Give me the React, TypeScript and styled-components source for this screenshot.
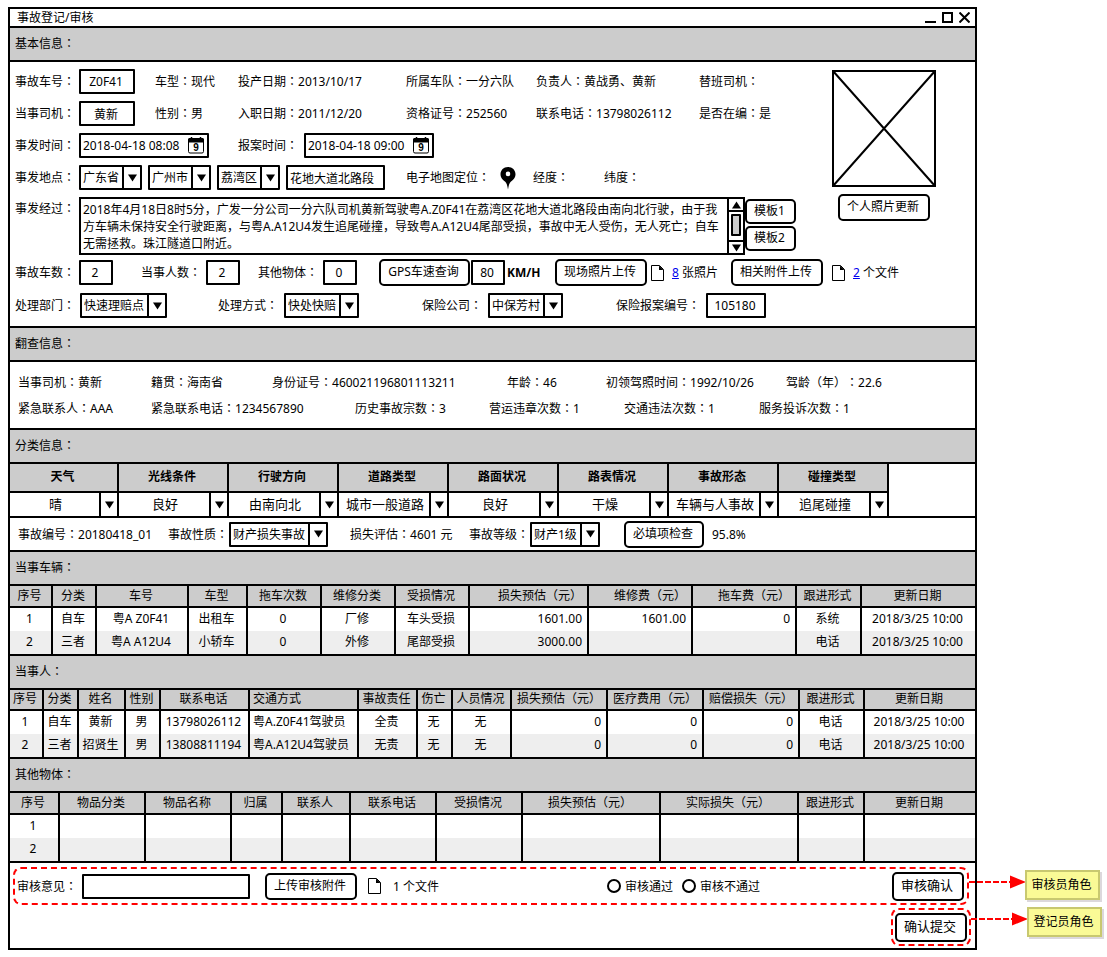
import React, { Fragment, useId } from "react";
import styled, { createGlobalStyle, css } from "styled-components";

const INK = "#000";
const PANEL = "#cccccc";
const STRIPE = "#eeeeee";
const FONT = '"Noto Sans", "Noto Sans CJK SC", sans-serif';

const GlobalStyle = createGlobalStyle`
  *, *::before, *::after { box-sizing: border-box; }
  body {
    margin: 0;
    background: #fff;
    color: ${INK};
    font: 12px/17px ${FONT};
    text-spacing-trim: space-all;
  }
  input, select, textarea, button { font: inherit; color: inherit; margin: 0; border-radius: 0; }
`;

/* ---------- frame ---------- */

const Page = styled.div`
  padding: 7px 130px 7px 8px;
`;

const Window = styled.main`
  min-width: 960px;
  border: 2px solid ${INK};
  background: #fff;
`;

const TitleBar = styled.header`
  display: flex;
  align-items: center;
  justify-content: space-between;
  height: 19px;
  padding: 0 5px 0 7px;
  border-bottom: 2px solid ${INK};
`;

const Title = styled.h1`
  margin: 0;
  font-size: 12px;
  line-height: 17px;
  font-weight: 400;
`;

const WindowControls = styled.div`
  display: flex;
  gap: 6px;
`;

const ControlButton = styled.button`
  display: block;
  width: 11px;
  height: 11px;
  padding: 0;
  border: 0;
  background: none;
  svg { display: block; }
`;

const SectionBar = styled.h2`
  height: 34px;
  margin: 0;
  padding: 7px 5px 0;
  background: ${PANEL};
  border-bottom: 2px solid ${INK};
  font-size: 12px;
  line-height: 17px;
  font-weight: 400;
`;

const Panel = styled.section<{ $pad?: string }>`
  padding: ${(p) => p.$pad ?? "0"};
  border-bottom: 2px solid ${INK};
`;

/* ---------- rows and fields ---------- */

const Row = styled.div<{ $h?: number; $top?: number }>`
  display: flex;
  align-items: center;
  min-height: ${(p) => p.$h ?? 25}px;
  margin-top: ${(p) => p.$top ?? 0}px;
  white-space: nowrap;
`;

const basis = css<{ $w?: number }>`
  flex: 0 0 ${(p) => (p.$w ? `${p.$w}px` : "auto")};
`;

const Cell = styled.div<{ $w?: number }>`
  ${basis}
  display: flex;
  align-items: center;
`;

const FieldLabel = styled.label<{ $w?: number }>`
  ${basis}
`;

const Value = styled.span<{ $w?: number }>`
  ${basis}
`;

/* The traditional face centres the full-width colon in its cell. */
const Colon = styled.span`
  font-family: "Noto Sans", "Noto Sans CJK TC", sans-serif;
`;

const TextBox = styled.input<{ $w: number; $left?: boolean }>`
  width: ${(p) => p.$w}px;
  height: 25px;
  padding: 0 4px 0 2px;
  border: 2px solid ${INK};
  border-radius: 1px;
  background: #fff;
  text-align: ${(p) => (p.$left ? "left" : "center")};
`;

const DateBox = styled.div`
  display: flex;
  align-items: center;
  width: 130px;
  height: 25px;
  padding: 0 3px 0 2px;
  border: 2px solid ${INK};
  border-radius: 1px;
`;

const DateInput = styled.input`
  flex: 1;
  min-width: 0;
  padding: 0;
  border: 0;
  outline: 0;
  background: none;
`;

const SelectBox = styled.div<{ $w?: number; $plain?: boolean }>`
  position: relative;
  width: ${(p) => (p.$w ? `${p.$w}px` : "100%")};
  height: ${(p) => (p.$plain ? 23 : 25)}px;
  border: ${(p) => (p.$plain ? "0" : `2px solid ${INK}`)};
  border-radius: 1px;
  font-size: ${(p) => (p.$plain ? 13 : 12)}px;
`;

const NativeSelect = styled.select<{ $center?: boolean }>`
  appearance: none;
  display: block;
  width: 100%;
  height: 100%;
  padding: 0 18px 0 2px;
  border: 0;
  background: none;
  text-align-last: ${(p) => (p.$center ? "center" : "left")};
`;

const SelectArrow = styled.span`
  position: absolute;
  top: 0;
  right: 0;
  bottom: 0;
  display: flex;
  align-items: center;
  justify-content: center;
  width: 18px;
  border-left: 2px solid ${INK};
  background: #fff;
  pointer-events: none;
`;

const Button = styled.button<{ $w: number; $size?: "small" | "large" }>`
  width: ${(p) => p.$w}px;
  height: ${(p) => (p.$size === "small" ? 25 : p.$size === "large" ? 29 : 27)}px;
  padding: 0 2px 2px 0;
  border: 2px solid ${INK};
  border-radius: 5px;
  background: #fff;
  font-size: ${(p) => (p.$size === "large" ? 13 : 12)}px;
  white-space: nowrap;
`;

const Link = styled.a`
  color: #0000ee;
`;

/* ---------- basic information ---------- */

const BasicTop = styled.div`
  display: flex;
  align-items: flex-start;
`;

const BasicFields = styled.div`
  flex: 1;
  min-width: 0;
  display: flex;
  flex-direction: column;
  gap: 7px;
`;

const PhotoColumn = styled.aside`
  display: flex;
  flex-direction: column;
  align-items: center;
  gap: 7px;
  width: 104px;
  margin: 1px 39px 0 0;
  svg { display: block; }
`;

const StoryRow = styled.div`
  display: flex;
  align-items: flex-start;
  padding-right: 36px;
  > label { padding-top: 3px; }
`;

const StoryBox = styled.div`
  flex: 1;
  display: flex;
  height: 58px;
  border: 2px solid ${INK};
`;

const StoryText = styled.textarea`
  flex: 1;
  min-width: 0;
  padding: 2px 0 0 2px;
  border: 0;
  outline: 0;
  resize: none;
  overflow: hidden;
  background: none;
  line-height: 17px;
`;

const ScrollBar = styled.div`
  display: flex;
  flex-direction: column;
  width: 16px;
  border-left: 2px solid ${INK};
`;

const ScrollEnd = styled.span`
  display: flex;
  align-items: center;
  justify-content: center;
  height: 11px;
`;

const ScrollTrack = styled.div`
  flex: 1;
  padding: 2px 2px 4px;
  border-top: 2px solid ${INK};
  border-bottom: 2px solid ${INK};
`;

const ScrollThumb = styled.div`
  height: 100%;
  border: 2px solid ${INK};
  border-radius: 1px;
  background: ${PANEL};
`;

const TemplateButtons = styled.div`
  display: flex;
  flex-direction: column;
  gap: 2px;
  padding-top: 2px;
`;

/* ---------- tables ---------- */

const Table = styled.table<{ $fit?: boolean; $head: number }>`
  width: ${(p) => (p.$fit ? "auto" : "100%")};
  table-layout: fixed;
  border-collapse: separate;
  border-spacing: 0;
  th {
    height: ${(p) => p.$head}px;
    background: ${PANEL};
    border-bottom: 2px solid ${INK};
  }
`;

type CellProps = { $align?: string; $line?: boolean; $flush?: boolean };

const cellBox = css<CellProps>`
  padding: ${(p) =>
    p.$flush ? "0" : p.$align === "right" ? "0 5px 2px 0" : p.$align === "left" ? "0 0 2px 3px" : "0 2px 2px 0"};
  border-right: ${(p) => (p.$line ? 2 : 0)}px solid ${INK};
  text-align: ${(p) => p.$align ?? "center"};
  white-space: nowrap;
`;

const HeadCell = styled.th<CellProps & { $bold?: boolean }>`
  ${cellBox}
  font-weight: ${(p) => (p.$bold ? 700 : 400)};
`;

const DataCell = styled.td<CellProps>`
  ${cellBox}
  height: 23px;
`;

const DataRow = styled.tr`
  &:nth-child(even) { background: ${STRIPE}; }
`;

/* ---------- review area ---------- */

const Footer = styled.footer`
  padding: 4px 0 2px;
`;

const ReviewBox = styled.div`
  position: relative;
  display: flex;
  align-items: center;
  height: 38px;
  margin: 0 6px 3px 3px;
  padding: 0 3px 0 2px;
  border: 2px dashed #f00;
  border-radius: 8px;
  white-space: nowrap;
`;

const SubmitBox = styled.div`
  position: relative;
  display: flex;
  align-items: center;
  justify-content: center;
  width: 80px;
  height: 38px;
  margin: 0 4px 0 auto;
  border: 2px dashed #f00;
  border-radius: 8px;
`;

const RadioGroup = styled.div`
  display: flex;
  gap: 9px;
`;

const RadioLabel = styled.label`
  display: flex;
  align-items: center;
  gap: 4px;
`;

const Radio = styled.input`
  appearance: none;
  flex: none;
  width: 14px;
  height: 14px;
  border: 2px solid ${INK};
  border-radius: 50%;
  background: #fff;
  &:checked { box-shadow: inset 0 0 0 2px #fff; background: ${INK}; }
`;

const ReviewEnd = styled.div`
  margin-left: auto;
`;

const Callout = styled.div<{ $top: number }>`
  position: absolute;
  top: ${(p) => p.$top}px;
  left: 100%;
  display: flex;
  svg { display: block; overflow: visible; }
`;

const Note = styled.div`
  display: flex;
  align-items: center;
  justify-content: center;
  width: 75px;
  height: 30px;
  padding: 0 2px 2px 0;
  border: 2px solid #c8c870;
  background: #fafa96;
  box-shadow: 2px 2px 0 #dcd8dc;
  white-space: nowrap;
`;

/* ---------- drawings ---------- */

const Triangle = ({ up }: { up?: boolean }) => (
  <svg width="9" height="8" viewBox="0 0 9 8" aria-hidden="true">
    <path d={up ? "M0 7.5 4.5 0.5 9 7.5Z" : "M0 0.5H9L4.5 7.5Z"} fill={INK} />
  </svg>
);

const CalendarIcon = () => (
  <svg width="16" height="17" viewBox="0 0 16 17" aria-hidden="true">
    <rect x="0.5" y="1.5" width="15" height="14.5" rx="1.5" fill="#fff" stroke={INK} />
    <path d="M0 2.5Q0 1 1.5 1H14.5Q16 1 16 2.5V5.5H0Z" fill={INK} />
    <path d="M3.5 0V2M12.5 0V2" stroke={INK} strokeWidth="1.5" />
    <text x="8" y="14" textAnchor="middle" fontFamily="Liberation Sans, sans-serif" fontSize="10" fontWeight="700">9</text>
  </svg>
);

const PinIcon = () => (
  <svg width="16" height="24" viewBox="0 0 16 24" aria-hidden="true">
    <path
      fillRule="evenodd"
      fill={INK}
      d="M8 1C3.6 1 0.5 4.2 0.5 8.2C0.5 11.8 3 14 5 15.6C6.6 17 7.2 19 8 23.5C8.8 19 9.4 17 11 15.6C13 14 15.5 11.8 15.5 8.2C15.5 4.2 12.4 1 8 1ZM8 5.6A2.3 2.3 0 1 1 8 10.2A2.3 2.3 0 1 1 8 5.6Z"
    />
  </svg>
);

const FileIcon = () => (
  <svg width="13" height="16" viewBox="0 0 13 16" aria-hidden="true">
    <path d="M0.5 0.5H8.5L12.5 4.5V15.5H0.5Z" fill="#fff" stroke={INK} />
    <path d="M8 0.5V5H12.5Z" fill={INK} />
  </svg>
);

const PhotoPlaceholder = () => (
  <svg width="104" height="117" viewBox="0 0 104 117" role="img" aria-label="个人照片">
    <rect x="1" y="1" width="102" height="115" fill="#fff" stroke={INK} strokeWidth="2" />
    <path d="M1 1 103 116M103 1 1 116" stroke={INK} strokeWidth="2" />
  </svg>
);

const Arrow = () => (
  <svg width="58" height="30" viewBox="0 0 58 30" aria-hidden="true">
    <path d="M2 12H44" stroke="#f00" strokeWidth="2" strokeDasharray="6 2" />
    <path d="M43 5.5 59 12 43 18.5Z" fill="#f00" />
  </svg>
);

/* ---------- composed controls ---------- */

const withColons = (text: string) =>
  text.split("：").map((part, i) => (
    <Fragment key={i}>
      {i > 0 && <Colon lang="zh-Hant">：</Colon>}
      {part}
    </Fragment>
  ));

const Label = ({ htmlFor, w, text }: { htmlFor: string; w: number; text: string }) => (
  <FieldLabel htmlFor={htmlFor} $w={w}>{withColons(text)}</FieldLabel>
);

const Text = ({ w, children }: { w?: number; children: string }) => <Value $w={w}>{withColons(children)}</Value>;

const SectionTitle = ({ children }: { children: string }) => <SectionBar>{withColons(children)}</SectionBar>;

type FieldProps = { label: string; labelWidth: number; width: number; cellWidth?: number; value: string };

const TextField = ({ label, labelWidth, width, cellWidth, value }: FieldProps) => {
  const id = useId();
  return (
    <>
      <Label htmlFor={id} w={labelWidth} text={label} />
      <Cell $w={cellWidth}><TextBox id={id} $w={width} defaultValue={value} /></Cell>
    </>
  );
};

const DateField = ({ label, labelWidth, cellWidth, value }: Omit<FieldProps, "width">) => {
  const id = useId();
  return (
    <>
      <Label htmlFor={id} w={labelWidth} text={label} />
      <Cell $w={cellWidth}>
        <DateBox>
          <DateInput id={id} defaultValue={value} />
          <CalendarIcon />
        </DateBox>
      </Cell>
    </>
  );
};

type SelectProps = { id?: string; name?: string; value: string; width?: number; plain?: boolean };

const Select = ({ id, name, value, width, plain }: SelectProps) => (
  <SelectBox $w={width} $plain={plain}>
    <NativeSelect id={id} aria-label={name} $center={plain} defaultValue={value}>
      <option>{value}</option>
    </NativeSelect>
    <SelectArrow><Triangle /></SelectArrow>
  </SelectBox>
);

const SelectField = ({ label, labelWidth, width, cellWidth, value }: FieldProps) => {
  const id = useId();
  return (
    <>
      <Label htmlFor={id} w={labelWidth} text={label} />
      <Cell $w={cellWidth}><Select id={id} value={value} width={width} /></Cell>
    </>
  );
};

type Column = { title: string; width?: number; align?: "left" | "right" };

const DataTable = ({ columns, rows, head }: { columns: Column[]; rows: string[][]; head: number }) => (
  <Table $head={head}>
    <colgroup>
      {columns.map((c) => <col key={c.title} width={c.width} />)}
    </colgroup>
    <thead>
      <tr>
        {columns.map((c, i) => (
          <HeadCell key={c.title} scope="col" $align={c.align} $line={i < columns.length - 1}>
            {c.title}
          </HeadCell>
        ))}
      </tr>
    </thead>
    <tbody>
      {rows.map((row) => (
        <DataRow key={row[0]}>
          {columns.map((c, i) => (
            <DataCell key={c.title} $align={c.align} $line={i < columns.length - 1}>{row[i]}</DataCell>
          ))}
        </DataRow>
      ))}
    </tbody>
  </Table>
);

/* ---------- data ---------- */

const conditions = [
  ["天气", "晴"],
  ["光线条件", "良好"],
  ["行驶方向", "由南向北"],
  ["道路类型", "城市一般道路"],
  ["路面状况", "良好"],
  ["路表情况", "干燥"],
  ["事故形态", "车辆与人事故"],
  ["碰撞类型", "追尾碰撞"],
];

const vehicleColumns: Column[] = [
  { title: "序号", width: 43 },
  { title: "分类", width: 44 },
  { title: "车号", width: 92 },
  { title: "车型", width: 59 },
  { title: "拖车次数", width: 74 },
  { title: "维修分类", width: 74 },
  { title: "受损情况", width: 74 },
  { title: "损失预估（元）", width: 119, align: "right" },
  { title: "维修费（元）", width: 104, align: "right" },
  { title: "拖车费（元）", width: 104, align: "right" },
  { title: "跟进形式", width: 65 },
  { title: "更新日期" },
];

const vehicles = [
  ["1", "自车", "粤A Z0F41", "出租车", "0", "厂修", "车头受损", "1601.00", "1601.00", "0", "系统", "2018/3/25 10:00"],
  ["2", "三者", "粤A A12U4", "小轿车", "0", "外修", "尾部受损", "3000.00", "", "", "电话", "2018/3/25 10:00"],
];

const personColumns: Column[] = [
  { title: "序号", width: 34 },
  { title: "分类", width: 35 },
  { title: "姓名", width: 47 },
  { title: "性别", width: 35 },
  { title: "联系电话", width: 89 },
  { title: "交通方式", width: 109, align: "left" },
  { title: "事故责任", width: 59 },
  { title: "伤亡", width: 35 },
  { title: "人员情况", width: 59 },
  { title: "损失预估（元）", width: 96, align: "right" },
  { title: "医疗费用（元）", width: 96, align: "right" },
  { title: "赔偿损失（元）", width: 96, align: "right" },
  { title: "跟进形式", width: 65 },
  { title: "更新日期" },
];

const persons = [
  ["1", "自车", "黄新", "男", "13798026112", "粤A.Z0F41驾驶员", "全责", "无", "无", "0", "0", "0", "电话", "2018/3/25 10:00"],
  ["2", "三者", "招贤生", "男", "13808811194", "粤A.A12U4驾驶员", "无责", "无", "无", "0", "0", "0", "电话", "2018/3/25 10:00"],
];

const objectColumns: Column[] = [
  { title: "序号", width: 50 },
  { title: "物品分类", width: 86 },
  { title: "物品名称", width: 86 },
  { title: "归属", width: 51 },
  { title: "联系人", width: 68 },
  { title: "联系电话", width: 86 },
  { title: "受损情况", width: 86 },
  { title: "损失预估（元）", width: 138 },
  { title: "实际损失（元）", width: 138 },
  { title: "跟进形式", width: 66 },
  { title: "更新日期" },
];

const story =
  "2018年4月18日8时5分，广发一分公司一分六队司机黄新驾驶粤A.Z0F41在荔湾区花地大道北路段由南向北行驶，由于我方车辆未保持安全行驶距离，与粤A.A12U4发生追尾碰撞，导致粤A.A12U4尾部受损，事故中无人受伤，无人死亡；自车无需拯救。珠江隧道口附近。";

/* ---------- page ---------- */

export default function App() {
  return (
    <Page lang="zh-CN">
      <GlobalStyle />
      <Window>
        <TitleBar>
          <Title>事故登记/审核</Title>
          <WindowControls>
            <ControlButton type="button" aria-label="最小化">
              <svg width="11" height="11" viewBox="0 0 11 11"><path d="M0 10H11" stroke={INK} strokeWidth="2" /></svg>
            </ControlButton>
            <ControlButton type="button" aria-label="最大化">
              <svg width="11" height="11" viewBox="0 0 11 11"><rect x="1" y="1" width="9" height="9" fill="none" stroke={INK} strokeWidth="2" /></svg>
            </ControlButton>
            <ControlButton type="button" aria-label="关闭">
              <svg width="11" height="11" viewBox="0 0 11 11"><path d="M0.5 0.5 10.5 10.5M10.5 0.5 0.5 10.5" stroke={INK} strokeWidth="2" /></svg>
            </ControlButton>
          </WindowControls>
        </TitleBar>

        <SectionTitle>基本信息：</SectionTitle>
        <Panel $pad="7px 0 8px 5px">
          <BasicTop>
            <BasicFields>
              <Row>
                <TextField label="事故车号：" labelWidth={64} width={56} cellWidth={76} value="Z0F41" />
                <Text w={83}>车型：现代</Text>
                <Text w={168}>投产日期：2013/10/17</Text>
                <Text w={130}>所属车队：一分六队</Text>
                <Text w={163}>负责人：黄战勇、黄新</Text>
                <Text>替班司机：</Text>
              </Row>
              <Row>
                <TextField label="当事司机：" labelWidth={64} width={56} cellWidth={76} value="黄新" />
                <Text w={83}>性别：男</Text>
                <Text w={168}>入职日期：2011/12/20</Text>
                <Text w={130}>资格证号：252560</Text>
                <Text w={163}>联系电话：13798026112</Text>
                <Text>是否在编：是</Text>
              </Row>
              <Row>
                <DateField label="事发时间：" labelWidth={64} cellWidth={159} value="2018-04-18 08:08" />
                <DateField label="报案时间：" labelWidth={66} value="2018-04-18 09:00" />
              </Row>
              <Row>
                <Label htmlFor="province" w={64} text="事发地点：" />
                <Cell $w={69}><Select id="province" width={63} value="广东省" /></Cell>
                <Cell $w={69}><Select name="城市" width={63} value="广州市" /></Cell>
                <Cell $w={69}><Select name="区" width={63} value="荔湾区" /></Cell>
                <Cell $w={120}><TextBox aria-label="路段" $w={99} $left defaultValue="花地大道北路段" /></Cell>
                <Text w={94}>电子地图定位：</Text>
                <Cell $w={33}><PinIcon /></Cell>
                <Text w={71}>经度：</Text>
                <Text>纬度：</Text>
              </Row>
              <StoryRow>
                <Label htmlFor="story" w={64} text="事发经过：" />
                <StoryBox>
                  <StoryText id="story" defaultValue={story} />
                  <ScrollBar aria-hidden="true">
                    <ScrollEnd><Triangle up /></ScrollEnd>
                    <ScrollTrack><ScrollThumb /></ScrollTrack>
                    <ScrollEnd><Triangle /></ScrollEnd>
                  </ScrollBar>
                </StoryBox>
                <TemplateButtons>
                  <Button type="button" $w={51} $size="small">模板1</Button>
                  <Button type="button" $w={51} $size="small">模板2</Button>
                </TemplateButtons>
              </StoryRow>
            </BasicFields>
            <PhotoColumn>
              <PhotoPlaceholder />
              <Button type="button" $w={92}>个人照片更新</Button>
            </PhotoColumn>
          </BasicTop>
          <Row $h={27} $top={4}>
            <TextField label="事故车数：" labelWidth={64} width={34} cellWidth={62} value="2" />
            <TextField label="当事人数：" labelWidth={65} width={34} cellWidth={52} value="2" />
            <TextField label="其他物体：" labelWidth={65} width={34} cellWidth={56} value="0" />
            <Cell $w={92}><Button type="button" $w={91}>GPS车速查询</Button></Cell>
            <Cell $w={36}><TextBox aria-label="车速" $w={34} defaultValue="80" /></Cell>
            <Value $w={48}><b>KM/H</b></Value>
            <Cell $w={96}><Button type="button" $w={92}>现场照片上传</Button></Cell>
            <Cell $w={21}><FileIcon /></Cell>
            <Value $w={59}><Link href="#photos">8</Link> 张照片</Value>
            <Cell $w={101}><Button type="button" $w={92}>相关附件上传</Button></Cell>
            <Cell $w={21}><FileIcon /></Cell>
            <Value><Link href="#files">2</Link> 个文件</Value>
          </Row>
          <Row $top={7}>
            <SelectField label="处理部门：" labelWidth={65} width={87} cellWidth={138} value="快速理赔点" />
            <SelectField label="处理方式：" labelWidth={66} width={75} cellWidth={138} value="快处快赔" />
            <SelectField label="保险公司：" labelWidth={66} width={75} cellWidth={128} value="中保芳村" />
            <TextField label="保险报案编号：" labelWidth={90} width={60} value="105180" />
          </Row>
        </Panel>

        <SectionTitle>翻查信息：</SectionTitle>
        <Panel $pad="8px 0 7px 8px">
          <Row>
            <Text w={133}>当事司机：黄新</Text>
            <Text w={121}>籍贯：海南省</Text>
            <Text w={235}>身份证号：460021196801113211</Text>
            <Text w={99}>年龄：46</Text>
            <Text w={180}>初领驾照时间：1992/10/26</Text>
            <Text>驾龄（年）：22.6</Text>
          </Row>
          <Row $top={1}>
            <Text w={133}>紧急联系人：AAA</Text>
            <Text w={204}>紧急联系电话：1234567890</Text>
            <Text w={134}>历史事故宗数：3</Text>
            <Text w={135}>营运违章次数：1</Text>
            <Text w={135}>交通违法次数：1</Text>
            <Text>服务投诉次数：1</Text>
          </Row>
        </Panel>

        <SectionTitle>分类信息：</SectionTitle>
        <Panel>
          <Table $fit $head={29}>
            <colgroup>
              {conditions.map(([name], i) => <col key={name} width={i ? 110 : 109} />)}
            </colgroup>
            <thead>
              <tr>
                {conditions.map(([name]) => <HeadCell key={name} scope="col" $bold $line>{name}</HeadCell>)}
              </tr>
            </thead>
            <tbody>
              <tr>
                {conditions.map(([name, value]) => (
                  <DataCell key={name} $line $flush><Select name={name} value={value} plain /></DataCell>
                ))}
              </tr>
            </tbody>
          </Table>
        </Panel>
        <Panel $pad="0 0 0 8px">
          <Row $h={32}>
            <Text w={150}>事故编号：20180418_01</Text>
            <SelectField label="事故性质：" labelWidth={61} width={99} cellWidth={121} value="财产损失事故" />
            <Text w={119}>损失评估：4601 元</Text>
            <SelectField label="事故等级：" labelWidth={61} width={70} cellWidth={94} value="财产1级" />
            <Cell $w={88}><Button type="button" $w={80}>必填项检查</Button></Cell>
            <Text>95.8%</Text>
          </Row>
        </Panel>

        <SectionTitle>当事车辆：</SectionTitle>
        <Panel><DataTable columns={vehicleColumns} rows={vehicles} head={22} /></Panel>

        <SectionTitle>当事人：</SectionTitle>
        <Panel><DataTable columns={personColumns} rows={persons} head={21} /></Panel>

        <SectionTitle>其他物体：</SectionTitle>
        <Panel><DataTable columns={objectColumns} rows={[["1"], ["2"]]} head={22} /></Panel>

        <Footer>
          <ReviewBox>
            <TextField label="审核意见：" labelWidth={65} width={168} cellWidth={183} value="" />
            <Cell $w={103}><Button type="button" $w={92}>上传审核附件</Button></Cell>
            <Cell $w={25}><FileIcon /></Cell>
            <Text w={214}>1 个文件</Text>
            <RadioGroup role="radiogroup" aria-label="审核结果">
              <RadioLabel><Radio type="radio" name="review" />审核通过</RadioLabel>
              <RadioLabel><Radio type="radio" name="review" />审核不通过</RadioLabel>
            </RadioGroup>
            <ReviewEnd><Button type="button" $w={72} $size="large">审核确认</Button></ReviewEnd>
            <Callout $top={1}>
              <Arrow />
              <Note>审核员角色</Note>
            </Callout>
          </ReviewBox>
          <SubmitBox>
            <Button type="button" $w={72} $size="large">确认提交</Button>
            <Callout $top={-3}>
              <Arrow />
              <Note>登记员角色</Note>
            </Callout>
          </SubmitBox>
        </Footer>
      </Window>
    </Page>
  );
}
